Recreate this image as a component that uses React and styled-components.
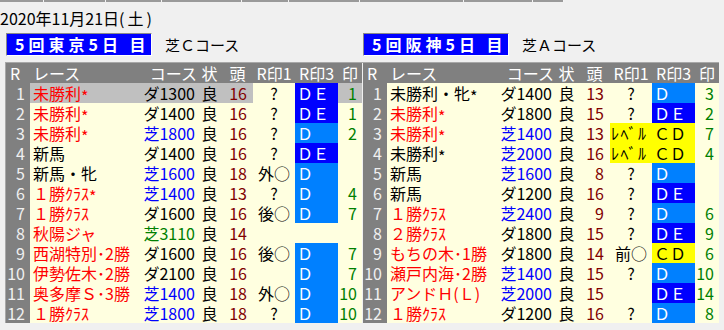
import React from 'react';
import styled, { createGlobalStyle } from 'styled-components';

const Global = createGlobalStyle`
  html, body { margin: 0; padding: 0; background: #f0f0f0; }
  body { font-family: "Noto Sans CJK JP", "Noto Sans", sans-serif; color: #000; }
`;

const COLS = '24px 110px 57px 25px 31px 42px 43px 24px';
const CREAM = '#ffffe0';
const SEL = '#c0c0c0';

const Page = styled.div`
  width: 724px;
  height: 330px;
  overflow: hidden;
  background: #f0f0f0;
`;

const TabStrip = styled.div`
  display: flex;
  height: 2px;
`;

const TabEdge = styled.div`
  box-sizing: border-box;
  width: ${(p) => p.$w}px;
  height: 2px;
  background: #9a9a9a;
  border-right: 1px solid #f4f4f4;
`;

const DateLine = styled.div`
  margin-top: 6px;
  height: 21px;
  line-height: 21px;
  font-size: 16px;
  white-space: nowrap;
`;

const Paren = styled.span`
  letter-spacing: 3px;
`;

const Heads = styled.div`
  display: grid;
  grid-template-columns: 356px 356px;
  column-gap: 1px;
  margin-top: 4px;
  padding-left: 6px;
`;

const MeetHead = styled.div`
  display: flex;
  align-items: center;
  gap: 13px;
`;

const MeetLabel = styled.div`
  box-sizing: border-box;
  width: 146px;
  height: 23px;
  line-height: 21px;
  padding-left: 8px;
  background: #0000ff;
  color: #fff;
  font-size: 16px;
  font-weight: bold;
  letter-spacing: 4px;
  white-space: pre;
  border-top: 1px solid #8a8a8a;
  border-left: 1px solid #8a8a8a;
  border-right: 1px solid #ffffff;
  border-bottom: 1px solid #ffffff;
`;

const TurfNote = styled.div`
  font-size: 15px;
  line-height: 21px;
  white-space: nowrap;
`;

const Tables = styled.div`
  display: grid;
  grid-template-columns: 356px 356px;
  column-gap: 1px;
  margin-top: 6px;
  margin-left: 5px;
  border-top: 1px solid #a8a8a8;
  border-left: 1px solid #a8a8a8;
  width: 713px;
`;

const Table = styled.div`
  display: flex;
  flex-direction: column;
`;

const Row = styled.div`
  display: grid;
  grid-template-columns: ${COLS};
  height: 20px;
  line-height: 20px;
  font-size: 16px;
  white-space: nowrap;
`;

const HeaderRow = styled(Row)`
  background: #808080;
  color: #ffffff;
`;

const HeaderCell = styled.div`
  text-align: ${(p) => p.$align || 'center'};
  padding-left: ${(p) => p.$pl || 0}px;
  padding-right: ${(p) => p.$pr || 0}px;
`;

const Cell = styled.div`
  background: ${(p) => (p.$sel ? SEL : CREAM)};
`;

const RNum = styled.div`
  background: #808080;
  color: #f0f0f0;
  text-align: right;
  padding-right: 5px;
`;

const RaceName = styled(Cell)`
  padding-left: 3px;
  color: ${(p) => (p.$red ? '#ff0000' : '#000000')};
`;

const Star = styled.span`
  position: relative;
  top: 3px;
`;

const CourseCell = styled(Cell)`
  text-align: right;
  padding-right: 2px;
  color: ${(p) => p.$fg};
`;

const Cond = styled(Cell)`
  text-align: center;
`;

const Runners = styled(Cell)`
  text-align: right;
  padding-right: 6px;
  color: #800000;
`;

const Mark1 = styled.div`
  text-align: ${(p) => (p.$level ? 'left' : 'center')};
  padding-left: ${(p) => (p.$level ? 1 : 0)}px;
  letter-spacing: ${(p) => (p.$level ? 1.5 : 0)}px;
  background: ${(p) => (p.$level ? '#ffff00' : CREAM)};
`;

const M3_STYLE = {
  DE: { bg: '#0000ff', fg: '#ffffff', text: 'ＤＥ' },
  D: { bg: '#0080ff', fg: '#ffffff', text: 'Ｄ' },
  CD: { bg: '#ffff00', fg: '#000000', text: 'ＣＤ' },
  '': { bg: CREAM, fg: '#000', text: '' },
};

const Mark3 = styled.div`
  padding-left: 2px;
  background: ${(p) => M3_STYLE[p.$kind].bg};
  color: ${(p) => M3_STYLE[p.$kind].fg};
`;

const Mark = styled(Cell)`
  text-align: right;
  padding-right: 5px;
  color: #008000;
`;

const COURSE_FG = { d: '#000000', t: '#0000ff', g: '#008000' };

const left = [
  [1, '未勝利*', 1, 'ダ1300', 'd', 16, '?', 'DE', 1, true],
  [2, '未勝利*', 1, 'ダ1400', 'd', 16, '?', 'DE', 1],
  [3, '未勝利*', 1, '芝1800', 't', 16, '?', 'D', 2],
  [4, '新馬', 0, 'ダ1400', 'd', 16, '?', 'DE', ''],
  [5, '新馬・牝', 0, '芝1600', 't', 18, '外○', 'D', ''],
  [6, '１勝ｸﾗｽ*', 1, '芝1400', 't', 13, '?', 'D', 4],
  [7, '１勝ｸﾗｽ', 1, 'ダ1600', 'd', 16, '後○', 'D', 7],
  [8, '秋陽ジャ', 1, '芝3110', 'g', 14, '', '', ''],
  [9, '西湖特別･2勝', 1, 'ダ1600', 'd', 16, '後○', 'D', 7],
  [10, '伊勢佐木･2勝', 1, 'ダ2100', 'd', 16, '', 'D', 7],
  [11, '奥多摩Ｓ･3勝', 1, '芝1400', 't', 18, '外○', 'D', 10],
  [12, '１勝ｸﾗｽ', 1, '芝1800', 't', 18, '?', 'D', 10],
];

const right = [
  [1, '未勝利・牝*', 0, 'ダ1400', 'd', 13, '?', 'D', 3],
  [2, '未勝利*', 1, 'ダ1800', 'd', 15, '?', 'DE', 2],
  [3, '未勝利*', 1, '芝1400', 't', 13, 'ﾚﾍﾞﾙ', 'CD', 7],
  [4, '未勝利*', 0, '芝2000', 't', 16, 'ﾚﾍﾞﾙ', 'CD', 4],
  [5, '新馬', 0, '芝1600', 't', 8, '?', 'D', ''],
  [6, '新馬', 0, 'ダ1200', 'd', 16, '?', 'DE', ''],
  [7, '１勝ｸﾗｽ', 1, '芝2400', 't', 9, '?', 'D', 6],
  [8, '２勝ｸﾗｽ', 1, 'ダ1800', 'd', 15, '?', 'DE', 9],
  [9, 'もちの木･1勝', 1, 'ダ1800', 'd', 14, '前○', 'CD', 6],
  [10, '瀬戸内海･2勝', 1, '芝1400', 't', 15, '?', 'D', 10],
  [11, 'アンドＨ(Ｌ)', 1, '芝2000', 't', 15, '', 'DE', 14],
  [12, '１勝ｸﾗｽ', 1, 'ダ1200', 'd', 16, '?', 'D', 8],
];

function NameText({ text }) {
  if (text.endsWith('*')) {
    return (
      <>
        {text.slice(0, -1)}
        <Star>*</Star>
      </>
    );
  }
  return text;
}

function RaceTable({ rows }) {
  return (
    <Table>
      <HeaderRow>
        <HeaderCell $align="left" $pl={4}>R</HeaderCell>
        <HeaderCell $align="left" $pl={3}>レース</HeaderCell>
        <HeaderCell $align="right">コース</HeaderCell>
        <HeaderCell>状</HeaderCell>
        <HeaderCell>頭</HeaderCell>
        <HeaderCell>R印1</HeaderCell>
        <HeaderCell>R印3</HeaderCell>
        <HeaderCell>印</HeaderCell>
      </HeaderRow>
      {rows.map(([r, name, red, course, ck, heads, m1, m3, mk, sel]) => (
        <Row key={r}>
          <RNum>{r}</RNum>
          <RaceName $red={!!red} $sel={sel}>
            <NameText text={name} />
          </RaceName>
          <CourseCell $fg={COURSE_FG[ck]} $sel={sel}>{course}</CourseCell>
          <Cond $sel={sel}>良</Cond>
          <Runners $sel={sel}>{heads}</Runners>
          <Mark1 $level={m1 === 'ﾚﾍﾞﾙ'}>{m1}</Mark1>
          <Mark3 $kind={m3}>{M3_STYLE[m3].text}</Mark3>
          <Mark $sel={sel}>{mk}</Mark>
        </Row>
      ))}
    </Table>
  );
}

const tabs = [44, 62, 56, 80, 47, 71, 104, 69, 31];

export default function App() {
  return (
    <Page>
      <Global />
      <TabStrip>
        {tabs.map((w, i) => (
          <TabEdge key={i} $w={w} />
        ))}
      </TabStrip>
      <DateLine>
        2020年11月21日<Paren>(土)</Paren>
      </DateLine>
      <Heads>
        <MeetHead>
          <MeetLabel>5回東京5日 目</MeetLabel>
          <TurfNote>芝Ｃコース</TurfNote>
        </MeetHead>
        <MeetHead>
          <MeetLabel>5回阪神5日 目</MeetLabel>
          <TurfNote>芝Ａコース</TurfNote>
        </MeetHead>
      </Heads>
      <Tables>
        <RaceTable rows={left} />
        <RaceTable rows={right} />
      </Tables>
    </Page>
  );
}
